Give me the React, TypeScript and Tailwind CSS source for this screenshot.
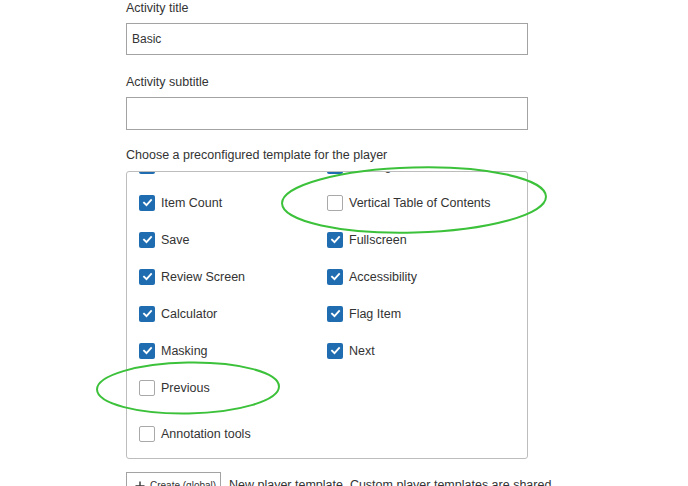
import React from "react";

type Item = { label: string; checked: boolean };

const rows: [Item, Item | null][] = [
  [{ label: "Line Reader", checked: true }, { label: "Scoring", checked: true }],
  [{ label: "Item Count", checked: true }, { label: "Vertical Table of Contents", checked: false }],
  [{ label: "Save", checked: true }, { label: "Fullscreen", checked: true }],
  [{ label: "Review Screen", checked: true }, { label: "Accessibility", checked: true }],
  [{ label: "Calculator", checked: true }, { label: "Flag Item", checked: true }],
  [{ label: "Masking", checked: true }, { label: "Next", checked: true }],
  [{ label: "Previous", checked: false }, null],
];

function Box({ checked }: { checked: boolean }) {
  if (checked) {
    return (
      <span className="flex h-[16px] w-[16px] shrink-0 items-center justify-center rounded-[2px] bg-[#1f6db0]">
        <svg width="11" height="11" viewBox="0 0 12 12" fill="none">
          <path d="M2.2 6.3 L4.9 8.9 L9.9 3.4" stroke="white" strokeWidth="2" strokeLinecap="square" />
        </svg>
      </span>
    );
  }
  return <span className="h-[16px] w-[16px] shrink-0 rounded-[2px] border border-[#a9a9a9] bg-white" />;
}

function Check({ item }: { item: Item }) {
  return (
    <div className="flex h-[37px] items-center gap-[6px]">
      <Box checked={item.checked} />
      <span className="whitespace-nowrap">{item.label}</span>
    </div>
  );
}

export default function App() {
  return (
    <div
      className="relative h-[486px] w-[688px] overflow-hidden bg-white text-[12.5px] leading-[16px] text-[#333]"
      style={{ fontFamily: '"Liberation Sans", Arial, sans-serif' }}
    >
      <div className="ml-[126px] w-[402px]">
        <div className="h-[16px]">Activity title</div>
        <div className="mt-[7px] flex h-[32px] items-center border border-[#a3a3a3] px-[5px] text-[12px]">Basic</div>
        <div className="mt-[19px] h-[16px]">Activity subtitle</div>
        <div className="mt-[7px] h-[33px] border border-[#a3a3a3]" />
        <div className="mt-[17px] h-[16px]">Choose a preconfigured template for the player</div>
        <div className="mt-[8px] h-[288px] overflow-hidden rounded-[3px] border border-[#bdbdbd] pl-[12px]">
          <div className="-mt-[25px]">
            {rows.map(([a, b], i) => (
              <div key={i} className="grid grid-cols-[188px_1fr]">
                <Check item={a} />
                {b ? <Check item={b} /> : <div />}
              </div>
            ))}
            <div className="mt-[9px]">
              <Check item={{ label: "Annotation tools", checked: false }} />
            </div>
          </div>
        </div>
        <div className="mt-[13px] flex items-start gap-[8px]">
          <div className="flex h-[28px] w-[95px] shrink-0 items-center gap-[5px] whitespace-nowrap border border-[#a3a3a3] pl-[8px] text-[10px]">
            <svg width="10" height="10" viewBox="0 0 10 10" className="shrink-0">
              <path d="M5 0.5 V9.5 M0.5 5 H9.5" stroke="#333" strokeWidth="1.4" />
            </svg>
            <span>Create (global)</span>
          </div>
          <div className="mt-[5px] whitespace-nowrap">New player template. Custom player templates are shared</div>
        </div>
      </div>
      <svg className="pointer-events-none absolute left-0 top-0" width="688" height="486">
        <ellipse cx="414" cy="200" rx="132" ry="32.5" fill="none" stroke="#3cc13a" strokeWidth="2" transform="rotate(-1.5 414 200)" />
        <ellipse cx="188" cy="388" rx="91" ry="25.5" fill="none" stroke="#3cc13a" strokeWidth="2" transform="rotate(-1 188 388)" />
      </svg>
    </div>
  );
}
